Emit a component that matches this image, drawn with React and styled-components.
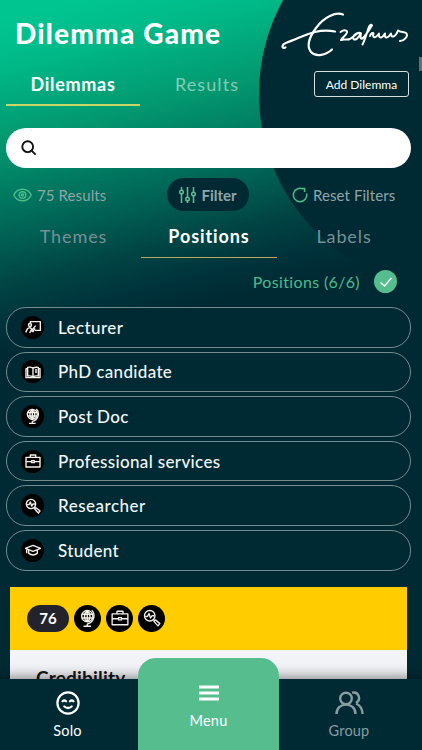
import React from 'react';
import styled, { createGlobalStyle } from 'styled-components';

const POSITIONS = [
  { name: 'Lecturer', icon: 'lecturer', spacing: '0.4px' },
  { name: 'PhD candidate', icon: 'book', spacing: '0.35px' },
  { name: 'Post Doc', icon: 'globe', spacing: '0.35px' },
  { name: 'Professional services', icon: 'briefcase', spacing: '0.35px' },
  { name: 'Researcher', icon: 'research', spacing: '0.5px' },
  { name: 'Student', icon: 'student', spacing: '0.35px' },
];

const icons = {
  lecturer: (
    <>
      <path d="M8 7V4h15v13h-8" />
      <circle cx="7.500" cy="9" r="2.300" />
      <path d="M1 20l3-6 4-1 3 3 5-6M7 21l2-4 3 2 3-5" />
    </>
  ),
  book: <path d="M12 6v14M12 6C9 4.500 6 4.500 4 5v13c3-.5 6 0 8 1.500C14 18 17 17.500 20 18V5c-3-.5-6 0-8 1M4 7H1.500v13.500h21V7H20M15 9h3M15 12h3" />,
  globe: (
    <>
      <circle cx="11" cy="9.500" r="7.500" />
      <path d="M4 7h14M4 12h14M11 2c-5 4-5 11 0 15M11 2c5 4 5 11 0 15M11 2v15M17 1.500c5 5 4 16-6 18.500M11 20v2.500M6 23h10" />
    </>
  ),
  briefcase: <path d="M1.500 6.500h21v14.500h-21zM8 6V3h8v3M2 13h8M14 13h8M10 11.500h4v3h-4z" />,
  research: (
    <>
      <circle cx="9" cy="9" r="7" />
      <path d="M3 10h3l2-4 2 6 2-3h3M14 14l2 2M16.500 14.500l6 5-2.500 3-5.500-6z" />
    </>
  ),
  student: <path d="M12 5L.5 9.500 12 14l11.500-4.500zM5.500 11.500V17c4 3 9 3 13 0v-5.500M2.500 10.500V17" />,
};

const RoundIcon = ({ name, size, glyph, stroke }) => (
  <IconCircle $size={size}>
    <svg
      width={glyph}
      height={glyph}
      viewBox="0 0 24 24"
      fill="none"
      stroke="#f4f0ea"
      strokeWidth={stroke}
      strokeLinejoin="round"
    >
      {icons[name]}
    </svg>
  </IconCircle>
);

const Signature = () => (
  <svg width="130" height="48" viewBox="0 0 130 48" fill="none" stroke="#fff" strokeLinecap="round" strokeLinejoin="round">
    <path d="M4.500 36.500C.5 38 0 33.500 6 31.500C16 28 24 23.500 34 21C42 19 49 19.500 54 20.500" strokeWidth="2.200" />
    <path d="M62 3.500C55 .5 43 6 35 17C27 28 26 36 30 41C35 46.500 45 44 51 38.500" strokeWidth="2.200" />
    <path
      d="M59.500 21C63 18.500 66.500 19 66 21.500C65 25 61 26.500 60 29C63 27.500 66 29.500 69 28C73 25.500 77 21 79.500 22C75 20.500 70 26.500 73 28.500C76 29.500 79 23.500 80 22.500C78.500 28 80.500 29 83 26C87 21 89.500 17 91 14.500C90 13 88.500 14 87.500 17C85.500 23 84 29 81.500 33.500M89 25C90 22 92 21.500 92.500 22.500C91 27 94 28 98 22.500C97 27.500 101 28 104 22.500C103 28 107 27.500 110 22.500C110 28 115 25.500 117 19.500C119 21.500 123 20.500 125 22C128 25 123 30 119 30"
      strokeWidth="2"
    />
  </svg>
);

const App = () => {
  return (
    <>
      <GlobalStyle />
      <Page>
        <Header>
          <Title>Dilemma Game</Title>
          <Signature />
        </Header>

        <MainTabs>
          <MainTab $active>Dilemmas</MainTab>
          <MainTab>Results</MainTab>
          <AddButton>Add Dilemma</AddButton>
        </MainTabs>

        <SearchBar>
          <svg width="16" height="16" viewBox="0 0 16 16" fill="none" stroke="#111" strokeWidth="1.900">
            <circle cx="6.700" cy="6.700" r="5.400" />
            <path d="M10.300 10.300l4.400 4.400" />
          </svg>
        </SearchBar>

        <Toolbar>
          <ResultCount>
            <svg width="19" height="14" viewBox="0 0 19 14" fill="none" stroke="#4dbb88" strokeWidth="1.500">
              <path d="M.8 7C4.500-.8 14.500-.8 18.200 7C14.500 14.800 4.500 14.800.8 7z" />
              <circle cx="9.500" cy="7" r="3.300" />
              <circle cx="9.500" cy="7" r="1" />
            </svg>
            75 Results
          </ResultCount>
          <FilterButton>
            <svg width="17" height="18" viewBox="0 0 17 18" fill="none" stroke="#5bc092" strokeWidth="1.500">
              <path d="M2.500 1v3M2.500 8v9M8.500 1v10M8.500 15v2M14.500 1v5M14.500 10v7" />
              <circle cx="2.500" cy="6" r="1.800" />
              <circle cx="8.500" cy="13" r="1.800" />
              <circle cx="14.500" cy="8" r="1.800" />
            </svg>
            Filter
          </FilterButton>
          <ResetButton>
            <svg width="16" height="16" viewBox="0 0 16 16" fill="none" stroke="#4dbb88" strokeWidth="1.500">
              <path d="M14.600 6.500A6.700 6.700 0 1 1 11.500 2.200M8.800 1.500h3.800v3.500" />
            </svg>
            Reset Filters
          </ResetButton>
        </Toolbar>

        <FilterTabs>
          <FilterTab>Themes</FilterTab>
          <FilterTab $active>Positions</FilterTab>
          <FilterTab>Labels</FilterTab>
        </FilterTabs>

        <Selection>
          Positions (6/6)
          <CheckCircle>
            <svg width="14" height="12" viewBox="0 0 14 12" fill="none" stroke="#fff" strokeWidth="1.300">
              <path d="M1.500 6.500l4 3.500 7-8" />
            </svg>
          </CheckCircle>
        </Selection>

        <PositionList>
          {POSITIONS.map(position => (
            <PositionItem key={position.name} $spacing={position.spacing}>
              <RoundIcon name={position.icon} size={23} glyph={16} stroke={2.1} />
              {position.name}
            </PositionItem>
          ))}
        </PositionList>

        <Card>
          <CardHeader>
            <Badge>76</Badge>
            <RoundIcon name="globe" size={27} glyph={18} stroke={1.8} />
            <RoundIcon name="briefcase" size={27} glyph={18} stroke={1.8} />
            <RoundIcon name="research" size={27} glyph={18} stroke={1.8} />
          </CardHeader>
          <CardTitle>Credibility</CardTitle>
        </Card>
        <ScrollThumb />

        <BottomNav>
          <NavItem>
            <svg width="24" height="24" viewBox="0 0 24 24" fill="none" stroke="#fff" strokeWidth="2.200" strokeLinecap="round">
              <circle cx="12" cy="12" r="10.600" />
              <path d="M6.500 10.300q1.800-1.600 3.600 0M13.900 10.300q1.800-1.600 3.600 0M8.300 15.500q3.700 3 7.400 0" />
            </svg>
            Solo
          </NavItem>
          <MenuItem>
            <svg width="20" height="16" viewBox="0 0 20 16" stroke="#fff" strokeWidth="2.900">
              <path d="M0 2h20M0 8h20M0 14h20" />
            </svg>
            Menu
          </MenuItem>
          <NavItem $muted>
            <svg width="29" height="24" viewBox="0 0 29 24" fill="none" stroke="#8b9ba2" strokeWidth="2.400">
              <circle cx="11" cy="7.500" r="5.800" />
              <path d="M1.500 23C1.500 10.500 20.500 10.500 20.500 23M17 1.700c7-1.500 9.500 7 4 10.300M21 12.500c4.500 2 6.500 5.500 6.500 10.500" />
            </svg>
            Group
          </NavItem>
        </BottomNav>
      </Page>
    </>
  );
};

export default App;

const GlobalStyle = createGlobalStyle`
  * {
    box-sizing: border-box;
  }

  body {
    margin: 0;
    overflow: hidden;
    background: #002a33;
    font-family: Lato, 'Open Sans', sans-serif;
  }

  button {
    font-family: inherit;
  }

  svg {
    flex-shrink: 0;
  }
`;

const Page = styled.div`
  position: relative;
  display: flex;
  flex-direction: column;
  height: 750px;
  padding: 0 11px 0 6px;
  overflow: hidden;
  background:
    radial-gradient(circle at 454px 94px, #002a33 194.5px, transparent 195.5px),
    linear-gradient(166deg, #00c591 20px, #00bb89 60px, #03976f 140px, #006e5b 210px, #004645 275px, #00333b 315px, #002a33 345px);
`;

const Header = styled.header`
  display: flex;
  justify-content: space-between;
  height: 64px;
  padding: 11px 0 0 9px;
`;

const Title = styled.h1`
  margin: 4px 0 0;
  color: #fff;
  font-size: 28px;
  font-weight: 900;
  line-height: 36px;
  letter-spacing: 1.2px;
`;

const MainTabs = styled.nav`
  display: flex;
  height: 64px;
`;

const MainTab = styled.div`
  width: 134px;
  height: 42px;
  border-bottom: 2px solid ${({ $active }) => ($active ? '#c9d566' : 'transparent')};
  color: ${({ $active }) => ($active ? '#fff' : 'rgba(255, 255, 255, 0.5)')};
  font-size: 18px;
  font-weight: ${({ $active }) => ($active ? 700 : 400)};
  line-height: 40px;
  letter-spacing: ${({ $active }) => ($active ? '0.7px' : '1.1px')};
  text-align: center;
`;

const AddButton = styled.button`
  width: 95px;
  height: 26px;
  margin: 7px 2px 0 auto;
  padding: 0;
  border: 1px solid #d9e0e2;
  border-radius: 3px;
  background: transparent;
  color: #fff;
  font-size: 12px;
  white-space: nowrap;
`;

const SearchBar = styled.div`
  display: flex;
  align-items: center;
  height: 40px;
  padding-left: 15px;
  border-radius: 20px;
  background: #fff;
`;

const Toolbar = styled.div`
  display: grid;
  grid-template-columns: 161px 82px 1fr;
  align-items: center;
  height: 33px;
  margin-top: 10px;
  color: #91a5aa;
  font-size: 15px;
`;

const ResultCount = styled.div`
  display: flex;
  align-items: center;
  gap: 5px;
  padding-left: 7px;
  letter-spacing: 0.1px;
`;

const FilterButton = styled.div`
  display: flex;
  align-items: center;
  justify-content: center;
  gap: 5px;
  height: 33px;
  border-radius: 17px;
  background: #002a33;
  font-weight: 700;
`;

const ResetButton = styled.div`
  display: flex;
  align-items: center;
  gap: 5px;
  padding-left: 43px;
  letter-spacing: 0.08px;
  white-space: nowrap;
`;

const FilterTabs = styled.div`
  display: grid;
  grid-template-rows: 47px;
  grid-template-columns: 135px 136px 1fr;
  height: 47px;
`;

const FilterTab = styled.div`
  border-bottom: 1px solid ${({ $active }) => ($active ? '#b7a95d' : 'transparent')};
  color: ${({ $active }) => ($active ? '#fff' : '#789096')};
  font-size: 18px;
  font-weight: ${({ $active }) => ($active ? 700 : 400)};
  line-height: 50px;
  letter-spacing: 0.9px;
  text-align: center;
`;

const Selection = styled.div`
  display: flex;
  align-items: center;
  justify-content: flex-end;
  gap: 14px;
  height: 48px;
  padding: 0 14px 1px 0;
  color: #4fba8c;
  font-size: 16px;
  letter-spacing: 0.35px;
`;

const CheckCircle = styled.span`
  display: flex;
  align-items: center;
  justify-content: center;
  width: 23px;
  height: 23px;
  border-radius: 50%;
  background: #56bd8f;
`;

const PositionList = styled.div`
  display: flex;
  flex-direction: column;
  gap: 4px;
  margin-top: 1px;
`;

const PositionItem = styled.div`
  display: flex;
  align-items: center;
  gap: 14px;
  height: 40.6px;
  padding-left: 14px;
  border: 1px solid #748b91;
  border-radius: 20px;
  background: #002a33;
  color: #f3f6f6;
  font-size: 17px;
  font-weight: 500;
  letter-spacing: ${({ $spacing }) => $spacing};
`;

const IconCircle = styled.span`
  display: flex;
  align-items: center;
  justify-content: center;
  flex-shrink: 0;
  width: ${({ $size }) => $size}px;
  height: ${({ $size }) => $size}px;
  border-radius: 50%;
  background: #000;
`;

const Card = styled.section`
  flex: 1;
  margin: 16.4px 4px 0;
  background: #f3f4f8;
`;

const CardHeader = styled.div`
  display: flex;
  align-items: center;
  gap: 5px;
  height: 63px;
  padding-left: 17px;
  background: #ffcc00;
`;

const Badge = styled.span`
  width: 42px;
  height: 27px;
  border-radius: 14px;
  background: #23232b;
  color: #fff;
  font-size: 15px;
  font-weight: 700;
  line-height: 27px;
  text-align: center;
`;

const CardTitle = styled.h2`
  margin: 16px 0 0 26px;
  color: #15151b;
  font-size: 19px;
  font-weight: 700;
  line-height: 24px;
  letter-spacing: 0.2px;
`;

const ScrollThumb = styled.span`
  position: absolute;
  top: 57px;
  right: 0;
  width: 3px;
  height: 14px;
  background: #607078;
`;

const BottomNav = styled.nav`
  position: absolute;
  right: 0;
  bottom: 0;
  left: 0;
  display: grid;
  grid-template-rows: 71px;
  grid-template-columns: 138px 141px 1fr;
  align-items: end;
  height: 71px;
  background: #002a33;
  box-shadow: 0 0 14px rgba(0, 0, 0, 0.6);
`;

const NavItem = styled.div`
  display: flex;
  flex-direction: column;
  align-items: center;
  gap: 6px;
  height: 71px;
  padding: 12px 3px 0 0;
  color: ${({ $muted }) => ($muted ? '#8b9ba2' : '#fff')};
  font-size: 14.5px;
  line-height: 20px;
  letter-spacing: 0.2px;
`;

const MenuItem = styled(NavItem)`
  height: 92px;
  gap: 10px;
  padding: 27px 0 0;
  border-radius: 18px 18px 0 0;
  background: #56bd8f;
`;
